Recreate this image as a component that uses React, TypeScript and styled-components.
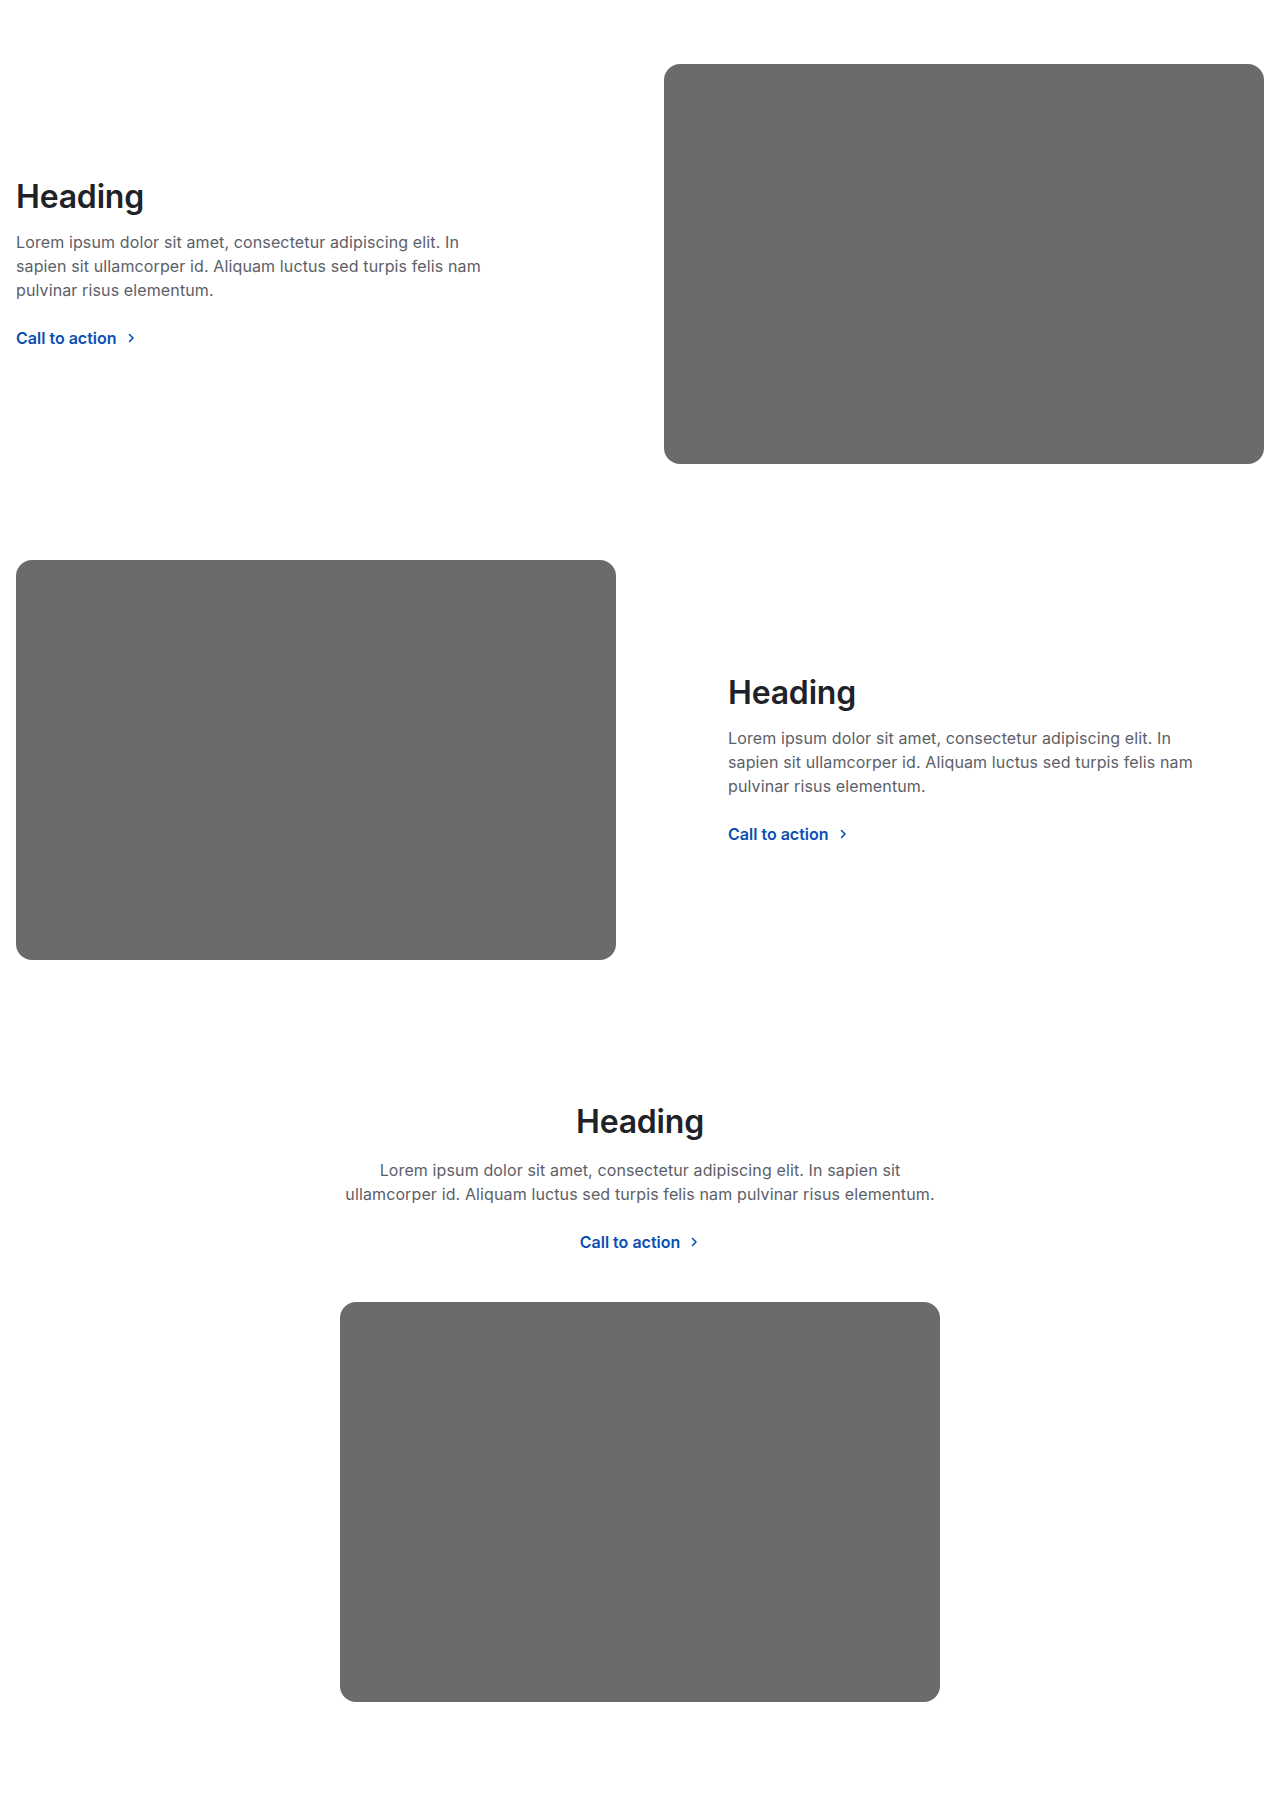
import React from "react";
import styled, { createGlobalStyle } from "styled-components";

const GlobalStyle = createGlobalStyle`
  html, body {
    margin: 0;
    padding: 0;
    background: #ffffff;
  }
  body {
    font-family: Inter, "Liberation Sans", Arial, sans-serif;
    -webkit-font-smoothing: antialiased;
  }
  * { box-sizing: border-box; }
`;

const Page = styled.main`
  padding: 16px 0;
  display: flex;
  flex-direction: column;
`;

const SplitSection = styled.section`
  padding: 48px 16px;
  display: grid;
  grid-template-columns: 1fr 1fr;
  column-gap: 48px;
  align-items: center;
`;

const StackSection = styled.section`
  padding: 95px 16px 93px;
  display: flex;
  flex-direction: column;
  align-items: center;
`;

const TextBlock = styled.div<{ $inset?: boolean; $center?: boolean }>`
  display: flex;
  flex-direction: column;
  align-items: ${(p) => (p.$center ? "center" : "flex-start")};
  text-align: ${(p) => (p.$center ? "center" : "left")};
  padding-left: ${(p) => (p.$inset ? "64px" : "0")};
`;

const Heading = styled.h2<{ $center?: boolean }>`
  margin: 0 0 ${(p) => (p.$center ? "17px" : "14px")};
  font-size: 32px;
  line-height: 38px;
  font-weight: 600;
  letter-spacing: -0.2px;
  color: #1f2329;
`;

const Body = styled.p<{ $wide?: boolean }>`
  margin: 0 0 24px;
  max-width: ${(p) => (p.$wide ? "600px" : "475px")};
  font-size: 16px;
  line-height: 24px;
  letter-spacing: 0.12px;
  color: #5b6068;
`;

const Cta = styled.a`
  display: inline-flex;
  align-items: center;
  gap: 8px;
  font-size: 16px;
  line-height: 24px;
  font-weight: 600;
  color: #0a4fb3;
  text-decoration: none;
  letter-spacing: 0;
`;

const Media = styled.div`
  width: 600px;
  height: 400px;
  background: #6b6b6b;
  border-radius: 16px;
`;

const StackMedia = styled(Media)`
  margin-top: 48px;
`;

const Chevron = () => (
  <svg width="12" height="12" viewBox="0 0 12 12" fill="none" aria-hidden="true">
    <path d="M4.5 2.5L8 6L4.5 9.5" stroke="currentColor" strokeWidth="1.6" strokeLinecap="round" strokeLinejoin="round" />
  </svg>
);

const LOREM =
  "Lorem ipsum dolor sit amet, consectetur adipiscing elit. In sapien sit ullamcorper id. Aliquam luctus sed turpis felis nam pulvinar risus elementum.";

const Copy = ({ inset, center, wide }: { inset?: boolean; center?: boolean; wide?: boolean }) => (
  <TextBlock $inset={inset} $center={center}>
    <Heading $center={center}>Heading</Heading>
    <Body $wide={wide}>{LOREM}</Body>
    <Cta href="#">
      Call to action <Chevron />
    </Cta>
  </TextBlock>
);

export default function App() {
  return (
    <>
      <GlobalStyle />
      <Page>
        <SplitSection>
          <Copy />
          <Media />
        </SplitSection>
        <SplitSection>
          <Media />
          <Copy inset />
        </SplitSection>
        <StackSection>
          <Copy center wide />
          <StackMedia />
        </StackSection>
      </Page>
    </>
  );
}
